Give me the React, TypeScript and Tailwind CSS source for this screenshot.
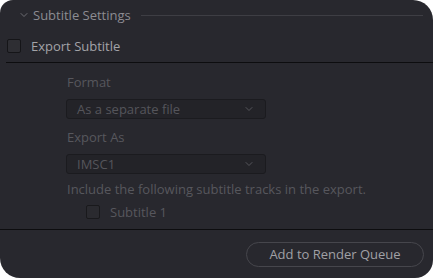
import { ChevronDown } from "lucide-react";

function Dropdown({ label }: { label: string }) {
  return (
    <div className="flex h-[20px] w-[200px] items-center justify-between rounded-[3px] border border-[#1b1b1f] bg-[#232328] pl-[10px] pr-[10px] text-[#55555b]">
      <span>{label}</span>
      <ChevronDown size={12} strokeWidth={2} className="text-[#55555b]" />
    </div>
  );
}

export default function App() {
  return (
    <div className="h-[278px] w-[433px] bg-white">
      <div
        className="flex h-full w-full flex-col rounded-tl-[13px] rounded-tr-[20px] rounded-bl-[20px] rounded-br-[18px] bg-[#28282e] text-[13px] leading-none"
        style={{ fontFamily: '"Open Sans", sans-serif' }}
      >
        {/* Section header */}
        <div className="flex h-[30px] items-center pl-[18px] pr-[10px]">
          <ChevronDown size={12} strokeWidth={1.75} className="text-[#76767c]" />
          <span className="ml-[3px] text-[#8c8c92]">Subtitle Settings</span>
          <div className="ml-[10px] h-px flex-1 bg-[#3e3e44]" />
        </div>

        {/* Export toggle */}
        <div className="flex h-[32px] items-center pl-[7px]">
          <div className="h-[14px] w-[14px] rounded-[2px] border border-[#151518] bg-[#2e2e33]" />
          <span className="ml-[10px] text-[#a3a3a8]">Export Subtitle</span>
        </div>
        <div className="ml-[6px] h-px bg-[#0d0d0f]" />

        {/* Disabled options */}
        <div className="flex flex-1 flex-col pl-[66px] text-[#57575d]">
          <div className="flex h-[36px] items-center pl-px pt-[3px]">Format</div>
          <Dropdown label="As a separate file" />
          <div className="flex h-[35px] items-center pl-px pt-[2px]">Export As</div>
          <Dropdown label="IMSC1" />
          <div className="flex h-[30px] items-center pl-px">
            Include the following subtitle tracks in the export.
          </div>
          <div className="flex items-center pl-[20px] pt-px">
            <div className="h-[14px] w-[14px] rounded-[2px] border border-[#19191c] bg-[#2a2a2f]" />
            <span className="ml-[10px]">Subtitle 1</span>
          </div>
        </div>
        <div className="h-px bg-[#0d0d0f]" />

        {/* Footer */}
        <div className="flex h-[48px] items-center justify-end pr-[9px]">
          <button className="flex h-[25px] w-[178px] items-center justify-center rounded-full border border-[#46464c] text-[#a0a0a5]">
            Add to Render Queue
          </button>
        </div>
      </div>
    </div>
  );
}
